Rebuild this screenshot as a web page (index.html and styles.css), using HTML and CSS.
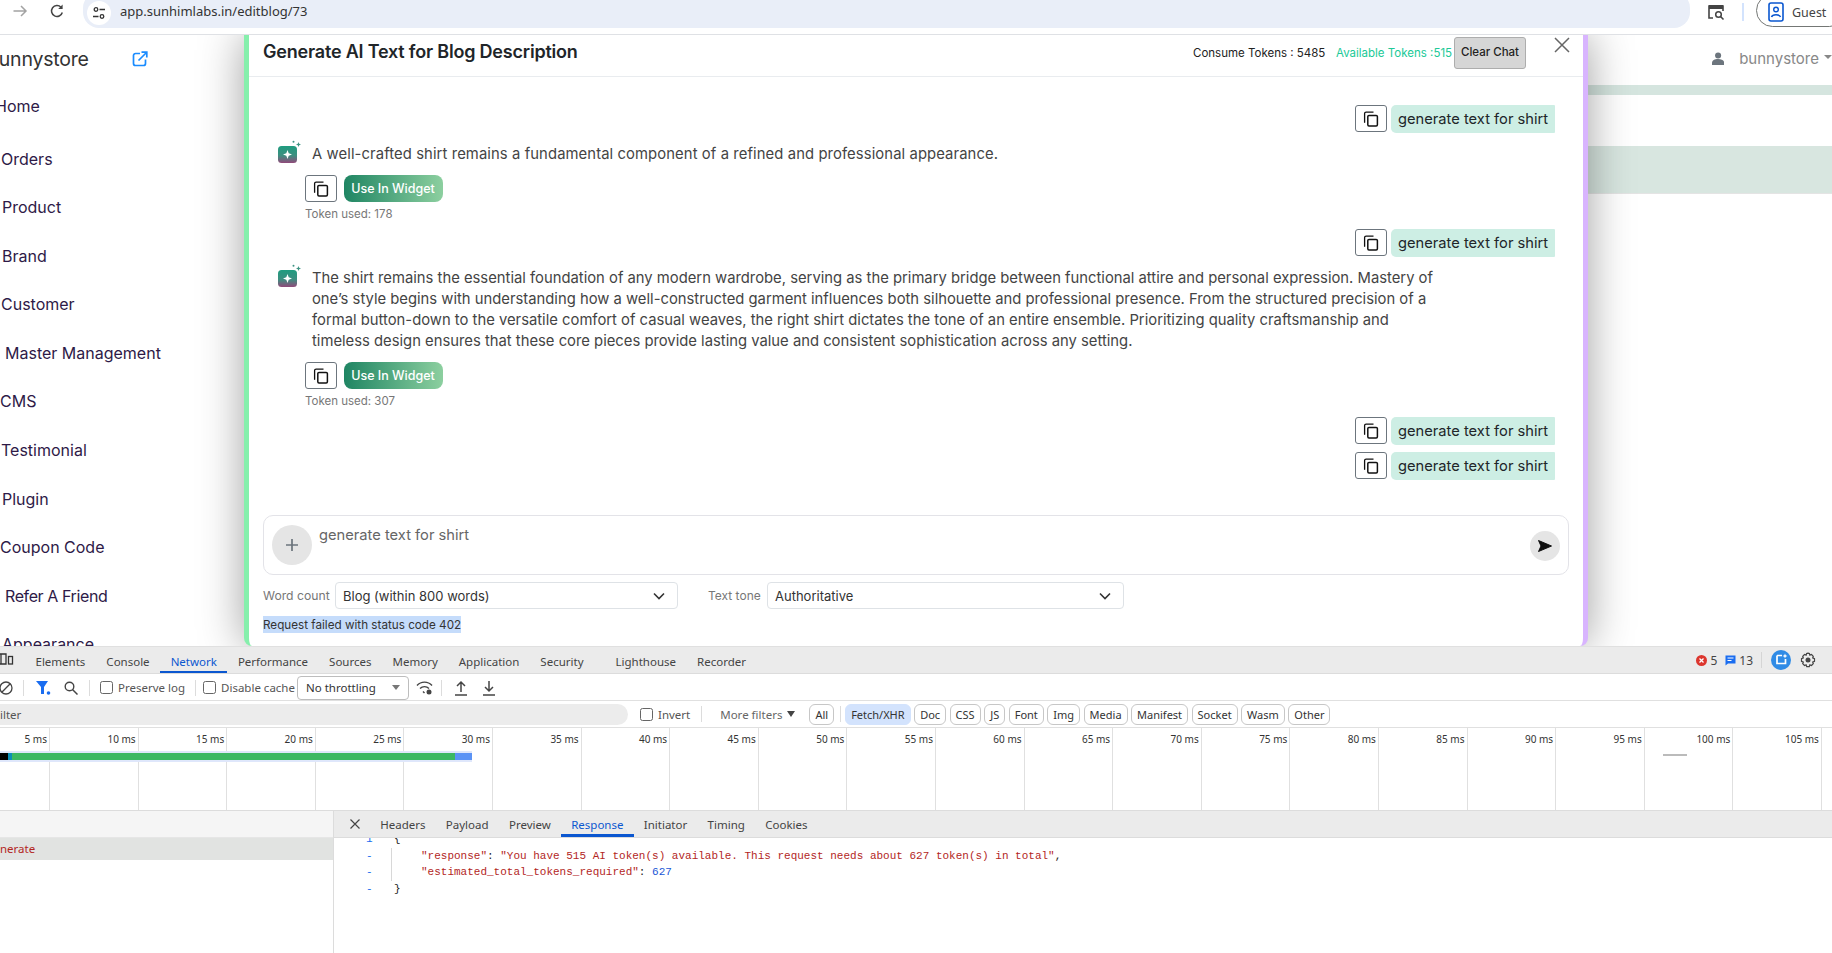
FILE: index.html
```html
<!DOCTYPE html>
<html lang="en">
<head>
<meta charset="utf-8">
<title>Edit blog</title>
<link rel="stylesheet" href="styles.css">
</head>
<body>
<svg class="defs" width="0" height="0" aria-hidden="true">
  <symbol id="copy" viewBox="0 0 16 16">
    <path d="M2 11.6 1.6 11.2V2.6C1.6 1.7 2.2 1.1 3.100 1.100H10.500" fill="none" stroke="#111" stroke-width="1.300"/>
    <rect x="4.800" y="4.400" width="9.600" height="10.600" rx="1.200" fill="#fff" stroke="#111" stroke-width="1.500"/>
  </symbol>
  <symbol id="spark" viewBox="0 0 24 23">
    <defs><linearGradient id="sg" x1="0" y1="0" x2="0" y2="1"><stop offset="0" stop-color="#1f9c7f"/><stop offset=".55" stop-color="#3c8f80"/><stop offset="1" stop-color="#91497a"/></linearGradient></defs>
    <rect x="0" y="6" width="19" height="17" rx="3.500" fill="url(#sg)"/>
    <path d="M9.500 10 10.700 13.300 14 14.500 10.700 15.700 9.500 19 8.300 15.700 5 14.500 8.300 13.300Z" fill="#fff"/>
    <path d="M20.500 2 21.200 3.800 23 4.500 21.200 5.200 20.500 7 19.800 5.200 18 4.500 19.800 3.800Z" fill="#3f9484"/>
    <circle cx="15.500" cy="1.800" r="1" fill="#3f9484"/>
  </symbol>
</svg>

<header class="browser">
  <svg class="b-arrow" width="16" height="16" viewBox="0 0 16 16"><path d="M1.500 8H14M9 3l5 5-5 5" fill="none" stroke="#a3a3a3" stroke-width="1.500"/></svg>
  <svg class="b-reload" width="16" height="16" viewBox="0 0 16 16"><path d="M13.300 9.500A5.500 5.500 0 1 1 12 4.200" fill="none" stroke="#444" stroke-width="1.500"/><path d="M13.600 1.500V6H9.200Z" fill="#444"/></svg>
  <div class="omnibox">
    <span class="site-chip"><svg width="14" height="14" viewBox="0 0 14 14"><circle cx="4" cy="3.500" r="1.800" fill="none" stroke="#333" stroke-width="1.300"/><path d="M7.500 3.500H13M1 10.500H6.500" stroke="#333" stroke-width="1.300"/><circle cx="10" cy="10.500" r="1.800" fill="none" stroke="#333" stroke-width="1.300"/></svg></span>
    <span class="url">app.sunhimlabs.in/editblog/73</span>
  </div>
  <svg class="b-lens" width="18" height="18" viewBox="0 0 18 18"><path d="M6 15H2V3h14v5" fill="none" stroke="#444" stroke-width="1.600"/><rect x="2" y="2" width="14" height="4" fill="#444"/><circle cx="11.500" cy="11.500" r="2.800" fill="none" stroke="#444" stroke-width="1.500"/><path d="M13.500 13.500 16.500 16.500" stroke="#444" stroke-width="1.600"/></svg>
  <span class="b-div"></span>
  <div class="guest">
    <svg width="16" height="20" viewBox="0 0 16 20"><rect x="1" y="1" width="14" height="18" rx="2" fill="none" stroke="#0b57d0" stroke-width="1.600"/><circle cx="8" cy="7.500" r="2.300" fill="none" stroke="#0b57d0" stroke-width="1.400"/><path d="M3.500 15c1-3 8-3 9 0" fill="none" stroke="#0b57d0" stroke-width="1.500"/></svg>
    <span>Guest</span>
  </div>
</header>

<main class="app">
  <aside class="side">
    <div class="side-head">
      <span class="brand">bunnystore</span>
      <svg class="ext" width="16" height="16" viewBox="0 0 16 16"><path d="M8 2.500H3.500a2 2 0 0 0-2 2v8a2 2 0 0 0 2 2h8a2 2 0 0 0 2-2V8.500" fill="none" stroke="#1a8cff" stroke-width="1.700"/><path d="M6.500 9.500 14.500 1.500M9.500 1.200h5.300v5.300" fill="none" stroke="#1a8cff" stroke-width="1.700"/></svg>
    </div>
    <nav class="nav">
      <a class="nav-item first">Home</a>
      <a class="nav-item i1">Orders</a>
      <a class="nav-item i2">Product</a>
      <a class="nav-item i2">Brand</a>
      <a class="nav-item i1">Customer</a>
      <a class="nav-item i5">Master Management</a>
      <a class="nav-item i0">CMS</a>
      <a class="nav-item i1">Testimonial</a>
      <a class="nav-item i2">Plugin</a>
      <a class="nav-item i0">Coupon Code</a>
      <a class="nav-item i5 tight">Refer A Friend</a>
      <a class="nav-item i2">Appearance</a>
    </nav>
  </aside>

  <section class="modal">
    <div class="m-head">
      <h1 class="m-title">Generate AI Text for Blog Description</h1>
      <span class="tok-used">Consume Tokens : 5485</span>
      <span class="tok-free">Available Tokens :515</span>
      <button class="clear">Clear Chat</button>
      <svg class="close" width="16" height="16" viewBox="0 0 16 16"><path d="M1 1 15 15M15 1 1 15" stroke="#666" stroke-width="1.500"/></svg>
    </div>

    <div class="chat">
      <div class="u-row r1">
        <button class="copy"><svg width="16" height="16"><use href="#copy"/></svg></button>
        <span class="bubble">generate text for shirt</span>
      </div>
      <div class="ai">
        <svg class="ai-ico" width="24" height="23"><use href="#spark"/></svg>
        <p class="ai-text ai-short">A well-crafted shirt remains a fundamental component of a refined and professional appearance.</p>
      </div>
      <div class="acts">
        <button class="copy"><svg width="16" height="16"><use href="#copy"/></svg></button>
        <button class="widget">Use In Widget</button>
      </div>
      <div class="used">Token used: 178</div>

      <div class="u-row r2">
        <button class="copy"><svg width="16" height="16"><use href="#copy"/></svg></button>
        <span class="bubble">generate text for shirt</span>
      </div>
      <div class="ai">
        <svg class="ai-ico" width="24" height="23"><use href="#spark"/></svg>
        <p class="ai-text">The shirt remains the essential foundation of any modern wardrobe, serving as the primary bridge between functional attire and personal expression. Mastery of<br>one’s style begins with understanding how a well-constructed garment influences both silhouette and professional presence. From the structured precision of a<br>formal button-down to the versatile comfort of casual weaves, the right shirt dictates the tone of an entire ensemble. Prioritizing quality craftsmanship and<br>timeless design ensures that these core pieces provide lasting value and consistent sophistication across any setting.</p>
      </div>
      <div class="acts">
        <button class="copy"><svg width="16" height="16"><use href="#copy"/></svg></button>
        <button class="widget">Use In Widget</button>
      </div>
      <div class="used">Token used: 307</div>

      <div class="u-row r3">
        <button class="copy"><svg width="16" height="16"><use href="#copy"/></svg></button>
        <span class="bubble">generate text for shirt</span>
      </div>
      <div class="u-row r4">
        <button class="copy"><svg width="16" height="16"><use href="#copy"/></svg></button>
        <span class="bubble">generate text for shirt</span>
      </div>
    </div>

    <div class="composer">
      <span class="plus"><svg width="14" height="14" viewBox="0 0 14 14"><path d="M7 1V13M1 7H13" stroke="#6c757d" stroke-width="1.700"/></svg></span>
      <span class="prompt">generate text for shirt</span>
      <span class="send"><svg width="14" height="12" viewBox="0 0 14 12"><path d="M0.500 0.500 13.500 6 0.500 11.500 3 6Z" fill="#111" stroke="#111" stroke-linejoin="round"/></svg></span>
    </div>

    <div class="opts">
      <label class="opt-label">Word count</label>
      <div class="sel sel-a"><span>Blog (within 800 words)</span><svg width="12" height="8" viewBox="0 0 12 8"><path d="M1 1.500 6 6.500 11 1.500" fill="none" stroke="#333" stroke-width="1.600"/></svg></div>
      <label class="opt-label tone">Text tone</label>
      <div class="sel sel-b"><span>Authoritative</span><svg width="12" height="8" viewBox="0 0 12 8"><path d="M1 1.500 6 6.500 11 1.500" fill="none" stroke="#333" stroke-width="1.600"/></svg></div>
    </div>
    <div class="err"><span>Request failed with status code 402</span></div>
  </section>

  <aside class="rightp">
    <div class="r-head">
      <svg width="14" height="15" viewBox="0 0 14 15"><circle cx="7" cy="4" r="3.500" fill="#6c757d"/><path d="M0 15v-2.500C0 9.500 3 8 7 8s7 1.500 7 4.500V15Z" fill="#6c757d"/></svg>
      <span class="r-user">bunnystore</span>
      <span class="caret"></span>
    </div>
    <div class="r-bar1"></div>
    <div class="r-bar2"></div>
  </aside>
</main>

<section class="dev">
  <div class="d-tabs">
    <svg class="dock" width="14" height="12" viewBox="0 0 14 12"><path d="M-3 1H6V11H-3M1 1V11" fill="none" stroke="#333" stroke-width="1.300"/><rect x="8.500" y="3.500" width="4" height="7.500" fill="none" stroke="#333" stroke-width="1.300"/></svg>
    <a class="tab t-el">Elements</a>
    <a class="tab">Console</a>
    <a class="tab on">Network</a>
    <a class="tab">Performance</a>
    <a class="tab">Sources</a>
    <a class="tab">Memory</a>
    <a class="tab">Application</a>
    <a class="tab">Security</a>
    <a class="tab t-lh">Lighthouse</a>
    <a class="tab">Recorder</a>
    <span class="d-right">
      <span class="badge-err"><svg width="11" height="11" viewBox="0 0 11 11"><circle cx="5.500" cy="5.500" r="5.500" fill="#dc362e"/><path d="M3.500 3.500 7.500 7.500M7.500 3.500 3.500 7.500" stroke="#fff" stroke-width="1.300"/></svg>5</span>
      <span class="badge-msg"><svg width="11" height="11" viewBox="0 0 11 11"><path d="M0.500 0.500H10.500V8.500H3L0.500 10.500Z" fill="#1a6df0"/><path d="M2.500 3H8.500M2.500 5.500H6.500" stroke="#fff"/></svg>13</span>
      <span class="d-sep"></span>
      <svg class="ai-dot" width="20" height="20" viewBox="0 0 20 20"><circle cx="10" cy="10" r="10" fill="#2f8be6"/><path d="M6 5.500H11M14.500 9V13.500H6V5.500" fill="none" stroke="#fff" stroke-width="1.700"/><path d="M14 3.500 14.700 5.300 16.500 6 14.700 6.700 14 8.500 13.300 6.700 11.500 6 13.300 5.300Z" fill="#fff"/></svg>
      <svg width="16" height="16" viewBox="0 0 16 16"><path d="M8 1.200 9.400 1.500 9.900 3.100 11.500 2.500 13.300 4.300 12.700 5.900 14.500 6.700V9.300L12.700 10.100 13.300 11.700 11.500 13.500 9.900 12.900 9.300 14.700H6.700L6.100 12.900 4.500 13.500 2.700 11.700 3.300 10.100 1.500 9.300V6.700L3.300 5.900 2.700 4.300 4.500 2.500 6.100 3.100 6.600 1.500Z" fill="none" stroke="#444" stroke-width="1.200"/><circle cx="8" cy="8" r="2.500" fill="#444"/></svg>
    </span>
  </div>

  <div class="d-bar">
    <svg class="i-block" width="16" height="16" viewBox="0 0 16 16"><circle cx="6" cy="8" r="6" fill="none" stroke="#444" stroke-width="1.300"/><path d="M1.800 12.200 10.200 3.800" stroke="#444" stroke-width="1.300"/></svg>
    <span class="vs vs1"></span>
    <svg class="i-filter" width="16" height="14" viewBox="0 0 16 14"><path d="M0 0H12L8 6V13H5V6Z" fill="#1a6df0"/><circle cx="12.500" cy="12" r="1.800" fill="#1a6df0"/></svg>
    <svg class="i-search" width="14" height="14" viewBox="0 0 14 14"><circle cx="5.500" cy="5.500" r="4.300" fill="none" stroke="#444" stroke-width="1.400"/><path d="M8.500 8.500 13.500 13.500" stroke="#444" stroke-width="1.500"/></svg>
    <span class="vs vs2"></span>
    <span class="chk c1"></span><span class="lbl">Preserve log</span>
    <span class="vs vs3"></span>
    <span class="chk c2"></span><span class="lbl">Disable cache</span>
    <div class="throttle"><span>No throttling</span><i class="tri tri-g"></i></div>
    <svg class="i-wifi" width="18" height="16" viewBox="0 0 18 16"><path d="M1 5.500C5 1 12 1 16 5.500M4 8.500C6.500 6 10.500 6 13 8.500M7 11.500 8.500 13" fill="none" stroke="#444" stroke-width="1.400"/><circle cx="13" cy="12" r="2.500" fill="#444"/></svg>
    <span class="vs vs4"></span>
    <svg class="i-up" width="14" height="16" viewBox="0 0 14 16"><path d="M7 12V2M3 6l4-4 4 4M1 15H13" fill="none" stroke="#444" stroke-width="1.500"/></svg>
    <svg class="i-down" width="14" height="16" viewBox="0 0 14 16"><path d="M7 1V11M3 7l4 4 4-4M1 15H13" fill="none" stroke="#444" stroke-width="1.500"/></svg>
  </div>

  <div class="d-filter">
    <div class="f-input">ilter</div>
    <span class="chk c3"></span><span class="lbl l-inv">Invert</span>
    <span class="vs vs5"></span>
    <span class="more">More filters</span><i class="tri tri-d"></i>
    <span class="chip c-all">All</span>
    <span class="vs vs6"></span>
    <span class="chip c-on">Fetch/XHR</span>
    <span class="chip">Doc</span>
    <span class="chip">CSS</span>
    <span class="chip">JS</span>
    <span class="chip">Font</span>
    <span class="chip">Img</span>
    <span class="chip">Media</span>
    <span class="chip">Manifest</span>
    <span class="chip">Socket</span>
    <span class="chip">Wasm</span>
    <span class="chip">Other</span>
  </div>

  <div class="overview">
    <div class="o-cell">5 ms</div><div class="o-cell">10 ms</div><div class="o-cell">15 ms</div><div class="o-cell">20 ms</div><div class="o-cell">25 ms</div><div class="o-cell">30 ms</div><div class="o-cell">35 ms</div><div class="o-cell">40 ms</div><div class="o-cell">45 ms</div><div class="o-cell">50 ms</div><div class="o-cell">55 ms</div><div class="o-cell">60 ms</div><div class="o-cell">65 ms</div><div class="o-cell">70 ms</div><div class="o-cell">75 ms</div><div class="o-cell">80 ms</div><div class="o-cell">85 ms</div><div class="o-cell">90 ms</div><div class="o-cell">95 ms</div><div class="o-cell">100 ms</div><div class="o-cell">105 ms</div>
    <div class="wf"><i class="w-k"></i><i class="w-t"></i><i class="w-g"></i><i class="w-b"></i></div>
    <div class="wf-dash"></div>
  </div>

  <div class="d-detail">
    <div class="req">
      <div class="req-head"></div>
      <div class="req-row">nerate</div>
    </div>
    <div class="resp">
      <div class="resp-tabs">
        <svg class="x" width="10" height="10" viewBox="0 0 10 10"><path d="M0.500 0.500 9.500 9.500M9.500 0.500 0.500 9.500" stroke="#444" stroke-width="1.200"/></svg>
        <a class="rt">Headers</a><a class="rt">Payload</a><a class="rt">Preview</a><a class="rt on">Response</a><a class="rt">Initiator</a><a class="rt">Timing</a><a class="rt">Cookies</a>
      </div>
      <div class="code">
        <div class="ln"><b>1</b><span class="pun">{</span></div>
        <div class="ln"><b>-</b><span class="in"><span class="k">"response"</span><span class="pun">: </span><span class="s">"You have 515 AI token(s) available. This request needs about 627 token(s) in total"</span><span class="pun">,</span></span></div>
        <div class="ln"><b>-</b><span class="in"><span class="k">"estimated_total_tokens_required"</span><span class="pun">: </span><span class="n">627</span></span></div>
        <div class="ln"><b>-</b><span class="pun">}</span></div>
      </div>
    </div>
  </div>
</section>
</body>
</html>
```
FILE: styles.css
```css
* { box-sizing: border-box; }
html, body { margin: 0; padding: 0; }
body {
  width: 1832px;
  height: 953px;
  overflow: hidden;
  display: flex;
  flex-direction: column;
  background: #fff;
  font-family: Inter, "Noto Sans", sans-serif;
  color: #222;
}
.defs { position: absolute; }
button { font-family: inherit; padding: 0; cursor: pointer; }

/* browser chrome */
.browser {
  height: 35px;
  flex: none;
  display: flex;
  align-items: flex-start;
  border-bottom: 1px solid #dfe1e5;
  font-family: "Noto Sans", sans-serif;
  overflow: hidden;
}
.b-arrow { margin: 3px 0 0 12px; flex: none; }
.b-reload { margin: 3px 0 0 21px; flex: none; }
.omnibox {
  margin: -8px 0 0 18px;
  width: 1607px;
  height: 36px;
  flex: none;
  background: #e9eef8;
  border-radius: 16px;
  display: flex;
  align-items: center;
  padding: 8px 0 0 4px;
}
.site-chip {
  width: 24px; height: 24px;
  border-radius: 50%;
  background: #fff;
  display: flex; align-items: center; justify-content: center;
  margin-top: -2px;
}
.url { margin: -6px 0 0 9px; font-size: 13px; color: #333; white-space: nowrap; }
.b-lens { margin: 3px 0 0 17px; flex: none; }
.b-div { width: 2px; height: 18px; background: #d3e3fd; margin: 3px 0 0 17px; flex: none; }
.guest {
  margin: -6px 0 0 12px;
  width: 90px; height: 33px;
  border: 1px solid #747775;
  border-radius: 17px;
  display: flex; align-items: center;
  padding: 3px 0 0 11px;
  gap: 8px;
  font-size: 12.500px;
  color: #444;
  flex: none;
}

/* app area */
.app { height: 611px; flex: none; display: flex; overflow: hidden; }
.side { width: 244px; flex: none; overflow: hidden; }
.side-head { height: 48px; display: flex; align-items: center; white-space: nowrap; }
.brand { margin-left: -13px; font-size: 19.500px; color: #333; letter-spacing: -.2px; width: 145px; flex: none; }
.nav { display: flex; flex-direction: column; }
.nav-item { height: 48.600px; line-height: 48.600px; font-size: 16px; color: #2e1a47; white-space: nowrap; flex: none; }
.first { margin-top: -1.500px; height: 53px; line-height: 48px; margin-left: -5px; }
.i0 { margin-left: 0; }
.i1 { margin-left: 1px; }
.i2 { margin-left: 2px; }
.i5 { margin-left: 5px; }
.tight { letter-spacing: -.4px; }

/* modal */
.modal {
  width: 1344px;
  flex: none;
  height: 611px;
  border-left: 5px solid #86efac;
  border-right: 5px solid #d8b4fe;
  border-radius: 0 0 8px 8px;
  background: #fff;
  box-shadow: 0 0 45px rgba(0,0,0,.38);
  position: relative;
  z-index: 2;
  display: flex;
  flex-direction: column;
}
.m-head {
  height: 42px;
  flex: none;
  border-bottom: 1px solid #e9ecef;
  display: flex;
  align-items: flex-start;
  padding-left: 14px;
  white-space: nowrap;
}
.m-title { margin: 6px 0 0; width: 930px; flex: none; font-size: 18px; line-height: 22px; font-weight: 600; color: #212529; letter-spacing: -.2px; }
.tok-used { margin-top: 11px; width: 143px; flex: none; font-size: 11.500px; line-height: 15px; color: #222; }
.tok-free { margin-top: 11px; width: 118px; flex: none; font-size: 11.500px; line-height: 15px; color: #20c997; }
.clear { margin-top: 2px; width: 72px; height: 32px; flex: none; background: #d6d6d6; border: 1px solid #adadad; border-radius: 3px; font-size: 11.500px; font-weight: 500; color: #222; padding-bottom: 3px; }
.close { margin: 2px 0 0 28px; flex: none; }

.chat { flex: 1; min-height: 0; display: flex; flex-direction: column; white-space: nowrap; }
.u-row { display: flex; justify-content: flex-end; align-items: flex-start; gap: 4.500px; padding-right: 28px; height: 28px; flex: none; }
.r1 { margin-top: 28px; }
.r2 { margin-top: 7px; }
.r3 { margin-top: 8px; }
.r4 { margin-top: 7px; }
.copy {
  width: 31.500px; height: 27px; flex: none;
  background: #fff;
  border: 1px solid #6c757d;
  border-radius: 3px;
  display: flex; align-items: center; justify-content: center;
}
.bubble {
  width: 164px; height: 28px;
  background: #cdeee4;
  border-radius: 5px 1px 1px 5px;
  font-size: 14.700px; line-height: 28px;
  color: #212529;
  padding-left: 7px;
}
.ai { display: flex; align-items: flex-start; margin: 11px 0 0 29px; gap: 10px; }
.ai-ico { margin-top: -4px; flex: none; }
.ai-text { margin: 0; font-size: 14.800px; line-height: 21px; color: #444; }
.ai-short { letter-spacing: .1px; }
.acts { display: flex; gap: 7px; margin: 10px 0 0 56px; }
.widget {
  width: 99px; height: 27px;
  border: 0;
  border-radius: 8px;
  background: linear-gradient(90deg, #1f8563, #8ccf9f);
  color: #fff;
  font-size: 12.500px;
  font-weight: 500;
  padding-bottom: 1px;
}
.used { margin: 4px 0 0 56px; font-size: 11.500px; line-height: 16px; color: #777; height: 16px; }

.composer {
  flex: none;
  height: 60px;
  margin: 0 14px;
  border: 1px solid #e3e3e8;
  border-radius: 10px;
  display: flex;
  align-items: flex-start;
  padding: 9px 8px 0 8px;
}
.plus { width: 40px; height: 40px; border-radius: 50%; background: #e5e5e5; display: flex; align-items: center; justify-content: center; flex: none; }
.prompt { margin: 1px 0 0 7px; flex: 1; font-size: 14.700px; line-height: 18px; color: #666; }
.send { width: 30px; height: 30px; margin-top: 6px; border-radius: 50%; background: #e5e5e5; display: flex; align-items: center; justify-content: center; flex: none; }

.opts { flex: none; display: flex; align-items: center; height: 27px; margin: 7px 0 0 14px; white-space: nowrap; }
.opt-label { width: 72px; flex: none; font-size: 12.200px; color: #777; }
.tone { width: 59px; margin-left: 30px; font-size: 12px; }
.sel {
  height: 27px;
  flex: none;
  display: flex; align-items: center; justify-content: space-between;
  border: 1px solid #dee2e6;
  border-radius: 4px;
  padding: 0 12px 0 7px;
  font-size: 13px;
  color: #333;
}
.sel-a { width: 343px; }
.sel-b { width: 357px; }
.err { flex: none; height: 17px; margin: 7px 0 13px 14px; font-size: 11.700px; line-height: 18px; color: #333; }
.err span { display: inline-block; width: 198px; height: 17px; background: #c5dcfb; white-space: nowrap; }

/* right panel behind */
.rightp { flex: 1; overflow: hidden; }
.r-head { height: 50px; display: flex; align-items: center; padding: 0 0 3px 124px; white-space: nowrap; }
.r-user { margin-left: 15px; font-size: 15px; color: #888; }
.caret { margin: -3px 0 0 5px; border: 4px solid transparent; border-top-color: #888; border-bottom: 0; flex: none; }
.r-bar1 { height: 10px; background: #d5e5df; }
.r-bar2 { margin-top: 51px; height: 48px; background: #d8e6e0; border-bottom: 1px solid #e4e4e4; }

/* devtools */
.dev { flex: 1; min-height: 0; display: flex; flex-direction: column; font-family: "Noto Sans", sans-serif; font-size: 11.500px; color: #444; position: relative; z-index: 3; background: #fff; }
.d-tabs { height: 28px; flex: none; background: #ebebeb; border-top: 1px solid #e0e0e0; border-bottom: 1px solid #dcdcdc; display: flex; align-items: stretch; white-space: nowrap; }
.dock { margin: 6px 0 0 0; flex: none; }
.tab { display: flex; align-items: center; justify-content: center; padding: 2px 10.500px 0; font-size: 11.500px; color: #444; flex: none; }
.tab.on { color: #0b57d0; box-shadow: inset 0 -2px 0 #0b57d0; }
.t-el { margin-left: 11px; }
.t-lh { margin-left: 11px; }
.d-right { margin-left: auto; display: flex; align-items: center; padding-right: 16px; }
.badge-err, .badge-msg { display: inline-flex; align-items: center; gap: 3px; font-size: 12px; }
.badge-msg { margin-left: 8px; }
.d-sep { width: 1px; height: 16px; background: #d5d5d5; margin: 0 9px 0 8px; }
.ai-dot { margin-right: 9px; }

.d-bar { height: 27px; flex: none; border-bottom: 1px solid #e0e0e0; display: flex; align-items: center; white-space: nowrap; padding-top: 1px; }
.i-block { margin-left: 0; flex: none; }
.vs { width: 1px; height: 16px; background: #dcdcdc; flex: none; }
.vs1 { margin-left: 7px; }
.i-filter { margin-left: 12px; flex: none; }
.i-search { margin-left: 12px; flex: none; }
.vs2 { margin-left: 11px; }
.chk { width: 13px; height: 13px; border: 1px solid #666; border-radius: 2.500px; flex: none; background: #fff; }
.c1 { margin-left: 10px; }
.c2 { margin-left: 7px; }
.c3 { margin-left: 12px; }
.lbl { margin-left: 5px; font-size: 11.500px; color: #555; }
.vs3 { margin-left: 10px; }
.throttle {
  margin-left: 2px;
  width: 112px; height: 24px; flex: none;
  border: 1px solid #bdbdbd; border-radius: 4px;
  display: flex; align-items: center; justify-content: space-between;
  padding: 0 8px 0 8px;
  color: #333;
  font-size: 11.500px;
}
.tri { display: block; width: 0; height: 0; border-left: 4px solid transparent; border-right: 4px solid transparent; flex: none; }
.tri-g { border-top: 5px solid #777; }
.tri-d { border-top: 6px solid #444; margin-left: 5px; }
.i-wifi { margin-left: 7px; flex: none; }
.vs4 { margin-left: 7px; }
.i-up { margin-left: 12px; flex: none; }
.i-down { margin-left: 14px; flex: none; }

.d-filter { height: 27px; flex: none; border-bottom: 1px solid #e0e0e0; display: flex; align-items: center; white-space: nowrap; }
.f-input { width: 628px; height: 21px; flex: none; background: #ececec; border-radius: 0 11px 11px 0; line-height: 22px; color: #555; font-size: 11.500px; }
.l-inv { margin-left: 5px; }
.vs5 { margin-left: 11px; }
.more { margin-left: 18px; color: #666; font-size: 11.500px; }
.chip {
  height: 21px; flex: none;
  border: 1px solid #c7c7c7;
  border-radius: 6px;
  padding: 0 5px;
  line-height: 20px;
  font-size: 11px;
  color: #333;
  margin-left: 3.500px;
}
.c-all { margin-left: 14px; }
.vs6 { margin-left: 6px; height: 16px; }
.c-on { margin-left: 4px; background: #d3e3fd; border-color: #d3e3fd; }

.overview { height: 83px; flex: none; display: grid; grid-template-columns: 50px repeat(20, 88.600px) 1fr; position: relative; border-bottom: 1px solid #dcdcdc; }
.o-cell { border-right: 1px solid #e0e0e0; text-align: right; padding: 5px 2px 0 0; font-size: 10px; line-height: 13px; color: #333; white-space: nowrap; }
.wf { position: absolute; left: 0; top: 23px; width: 472px; height: 11px; background: #dfe7fb; display: flex; padding: 2px 0; }
.wf i { display: block; height: 100%; }
.w-k { width: 8px; background: #000; }
.w-t { width: 4px; background: #0b8fb5; }
.w-g { width: 443px; background: #3cb863; }
.w-b { width: 17px; background: #5b93f5; }
.wf-dash { position: absolute; left: 1663px; top: 26px; width: 24px; height: 2px; background: #bbb; }

.d-detail { flex: 1; min-height: 0; display: flex; overflow: hidden; }
.req { width: 334px; flex: none; border-right: 1px solid #dcdcdc; }
.req-head { height: 27px; background: #f5f5f5; border-bottom: 1px solid #e6e6e6; }
.req-row { height: 22px; background: #e1e3e1; color: #b3261e; font-size: 11.500px; line-height: 22px; }
.resp { flex: 1; min-width: 0; }
.resp-tabs { height: 27px; background: #ebebeb; border-bottom: 1px solid #dcdcdc; display: flex; align-items: stretch; position: relative; z-index: 1; }
.x { margin: 8px 10px 0 16px; flex: none; }
.rt { display: flex; align-items: center; padding: 0 10.200px; font-size: 11.500px; color: #444; flex: none; }
.rt.on { color: #0b57d0; box-shadow: inset 0 -3px 0 #0b57d0; }
.code { font-family: "Liberation Mono", monospace; font-size: 11px; line-height: 16.500px; margin-top: -7px; color: #222; }
.ln { display: flex; height: 16.500px; white-space: pre; }
.ln b { width: 60px; flex: none; padding-left: 32px; font-weight: 400; color: #1a6df0; }
.in { margin-left: 27px; position: relative; }
.in::before { content: ""; position: absolute; left: -30px; top: 0; bottom: 0; width: 1px; background: #d8d8d8; }
.k { color: #b3261e; }
.s { color: #b3261e; }
.n { color: #1a56d6; }
.pun { color: #222; }
```
